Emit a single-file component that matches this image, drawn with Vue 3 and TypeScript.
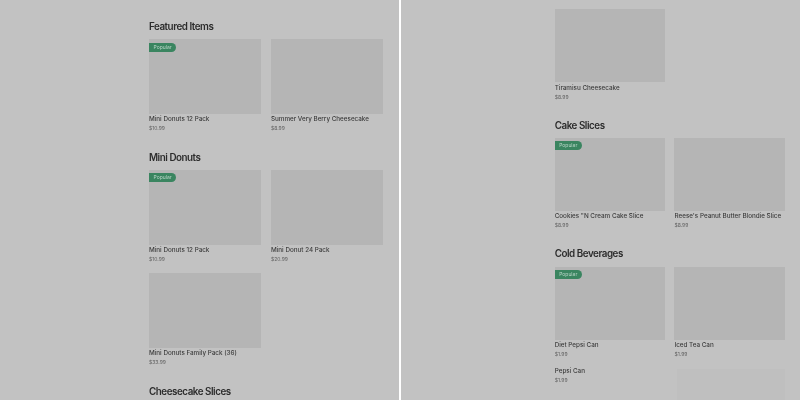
<script setup lang="ts">
interface Item { name: string; price: string; popular?: boolean; noImage?: boolean; ghost?: boolean }
interface Section { title: string; items: Item[] }

const left: Section[] = [
  { title: 'Featured Items', items: [
    { name: 'Mini Donuts 12 Pack', price: '$10.99', popular: true },
    { name: 'Summer Very Berry Cheesecake', price: '$8.99' },
  ] },
  { title: 'Mini Donuts', items: [
    { name: 'Mini Donuts 12 Pack', price: '$10.99', popular: true },
    { name: 'Mini Donut 24 Pack', price: '$20.99' },
    { name: 'Mini Donuts Family Pack (36)', price: '$33.99' },
  ] },
  { title: 'Cheesecake Slices', items: [] },
]
const right: Section[] = [
  { title: '', items: [{ name: 'Tiramisu Cheesecake', price: '$8.99' }] },
  { title: 'Cake Slices', items: [
    { name: 'Cookies "N Cream Cake Slice', price: '$8.99', popular: true },
    { name: "Reese's Peanut Butter Blondie Slice", price: '$8.99' },
  ] },
  { title: 'Cold Beverages', items: [
    { name: 'Diet Pepsi Can', price: '$1.99', popular: true },
    { name: 'Iced Tea Can', price: '$1.99' },
    { name: 'Pepsi Can', price: '$1.99', noImage: true },
    { name: '', price: '', ghost: true },
  ] },
]
const panels = [
  { key: 'left', sections: left },
  { key: 'right', sections: right },
]
</script>

<template>
  <div class="page">
    <div v-for="p in panels" :key="p.key" class="panel" :class="p.key">
      <section v-for="(s, i) in p.sections" :key="i" class="section">
        <h2 v-if="s.title" class="title">{{ s.title }}</h2>
        <div v-if="s.items.length" class="grid">
          <article v-for="(it, j) in s.items" :key="j" class="card" :class="{ ghost: it.ghost, bare: it.noImage }">
            <div v-if="it.ghost" class="ghost-img"></div>
            <div v-else-if="!it.noImage" class="img">
              <span v-if="it.popular" class="badge">Popular</span>
            </div>
            <template v-if="!it.ghost">
              <div class="name">{{ it.name }}</div>
              <div class="price">{{ it.price }}</div>
            </template>
          </article>
        </div>
      </section>
    </div>
  </div>
</template>

<style>
html, body { margin: 0; background: #fff; }
</style>

<style scoped>
.page {
  width: 800px;
  height: 400px;
  display: flex;
  gap: 2px;
  background: #fff;
  overflow: hidden;
  font-family: Inter, "Liberation Sans", sans-serif;
}
.panel {
  height: 400px;
  background: #c2c2c2;
  overflow: hidden;
  box-sizing: border-box;
  flex: none;
  display: flex;
  flex-direction: column;
  will-change: opacity;
}
.panel.left {
  width: 399px;
  padding: 20px 16px 0 149px;
  gap: 17.6px;
}
.panel.right {
  width: 399px;
  padding: 8.9px 15.5px 0 153.7px;
  gap: 17px;
}
.title {
  margin: 0 0 5.3px;
  font-size: 9.8px;
  line-height: 14px;
  font-weight: 600;
  letter-spacing: -0.45px;
  color: #2c2c2c;
  will-change: opacity;
}
.grid {
  display: grid;
  grid-template-columns: minmax(0, 1fr) minmax(0, 1fr);
  column-gap: 10px;
  row-gap: 9.3px;
}
.right .grid { column-gap: 9.8px; }
.img {
  aspect-ratio: 3 / 2;
  background: #b5b5b5;
  position: relative;
}
.badge {
  position: absolute;
  left: 0;
  top: 3.3px;
  height: 9px;
  padding: 0 4.5px 0 4.5px;
  background: #3a8560;
  border-radius: 0 5px 5px 0;
  color: #b8d4c6;
  font-size: 5px;
  line-height: 9px;
  will-change: opacity;
}
.name {
  margin-top: 1.3px;
  font-size: 6.3px;
  font-weight: 500;
  line-height: 9px;
  color: #3c3c3c;
  white-space: nowrap;
  will-change: opacity;
}
.bare .name { margin-top: -1.4px; }
.price {
  font-size: 5px;
  line-height: 9px;
  color: #626262;
  will-change: opacity;
}
.ghost-img {
  height: 60px;
  margin-left: 3px;
  background: #bfbfbf;
}
</style>
